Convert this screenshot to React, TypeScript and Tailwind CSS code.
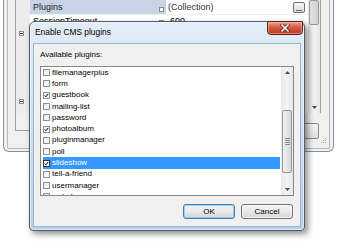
import React from "react";

type Item = { label: string; checked: boolean; selected?: boolean };

const items: Item[] = [
  { label: "filemanagerplus", checked: false },
  { label: "form", checked: false },
  { label: "guestbook", checked: true },
  { label: "mailing-list", checked: false },
  { label: "password", checked: false },
  { label: "photoalbum", checked: true },
  { label: "pluginmanager", checked: false },
  { label: "poll", checked: false },
  { label: "slideshow", checked: true, selected: true },
  { label: "tell-a-friend", checked: false },
  { label: "usermanager", checked: false },
  { label: "webshop", checked: false },
];

function Check() {
  return (
    <svg width="7" height="7" viewBox="0 0 7 7" className="block">
      <path d="M1.1 3.5 L2.7 5.3 L5.9 1.3" fill="none" stroke="#000" strokeWidth="1.4" />
    </svg>
  );
}

function Collapse() {
  return (
    <div className="w-[5px] h-[5px] border border-[#8c8c8c] bg-white flex items-center justify-center">
      <div className="w-[3px] h-[1px] bg-[#333]" />
    </div>
  );
}

function UpArrow() {
  return (
    <svg width="5" height="3" viewBox="0 0 5 3" className="block">
      <path d="M0 3 L2.5 0 L5 3 Z" fill="#4a4a4a" />
    </svg>
  );
}

function DownArrow() {
  return (
    <svg width="5" height="3" viewBox="0 0 5 3" className="block">
      <path d="M0 0 L5 0 L2.5 3 Z" fill="#4a4a4a" />
    </svg>
  );
}

export default function App() {
  return (
    <div className="relative w-[337px] h-[246px] overflow-hidden bg-white font-['Liberation_Sans',Arial,sans-serif] text-black">
      {/* background window */}
      <div className="ml-[3px] w-[331px] h-[152px] border-x border-b border-[#8d9094] rounded-b-[6px] bg-[#eef1f5] px-[3px] pb-[2px] flex">
        <div className="flex-1 border-x border-b border-[#b4b8bd] rounded-b-[2px] bg-[#f0f0f0] flex flex-col">
          {/* top row: property grid */}
          <div className="h-[113px] flex">
            <div className="w-[7px]" />
            <div className="w-[306px] border-x border-[#a0a0a0] flex">
              {/* gutter */}
              <div className="w-[14px] bg-[#ececec] flex flex-col items-start pl-[3px]">
                <div className="mt-[31px]"><Collapse /></div>
                <div className="mt-[63px]"><Collapse /></div>
              </div>
              {/* content */}
              <div className="w-[278px] bg-white flex flex-col text-[9px] leading-none">
                <div className="h-[14px] flex">
                  <div className="w-[136px] bg-[#c8d3e6] flex items-center pl-[3px] pr-[1px] justify-between">
                    <span className="text-[#1a1a2e]">Plugins</span>
                    <div className="w-[5px] h-[5px] border border-[#8a8a8a] bg-white mt-[5px] mr-[1px]" />
                  </div>
                  <div className="flex-1 flex items-center justify-between pl-[2px] pr-[3px]">
                    <span className="text-[#333]">(Collection)</span>
                    <div className="w-[12px] h-[11px] border border-[#707070] rounded-[2px] bg-gradient-to-b from-[#f7f7f7] to-[#dcdcdc] flex items-end justify-center pb-[1px]">
                      <span className="text-[7px] leading-[5px] font-bold">...</span>
                    </div>
                  </div>
                </div>
                <div className="h-[14px] flex border-t border-[#f0f0f0]">
                  <div className="w-[136px] pl-[3px] pt-[2px] flex justify-between pr-[1px]">
                    <span>SessionTimeout</span>
                    <div className="w-[5px] h-[5px] border border-[#8a8a8a] bg-white mt-[3px] mr-[1px]" />
                  </div>
                  <div className="flex-1 pl-[4px] pt-[2px]">600</div>
                </div>
                <div className="flex-1 bg-white" />
              </div>
              {/* scrollbar */}
              <div className="w-[12px] bg-gradient-to-r from-[#e6e6e6] via-[#f4f4f4] to-[#e6e6e6] flex flex-col">
                <div className="h-[25px] mx-[1px] border border-[#9a9a9a] rounded-[2px] bg-gradient-to-r from-[#e2e2e2] to-[#cfcfcf]" />
                <div className="flex-1" />
                <div className="h-[12px] flex items-center justify-center">
                  <DownArrow />
                </div>
              </div>
            </div>
          </div>
          {/* bottom row */}
          <div className="flex-1 flex">
            <div className="w-[7px]" />
            <div className="w-[180px] h-[18px] border-l border-b border-[#a0a0a0]" />
            <div className="w-[108px]" />
            <div className="w-[16px] h-[16px] mt-[10px] border border-[#8a8a8a] rounded-[2px] bg-gradient-to-b from-[#f4f4f4] to-[#dedede]" />
            <div className="flex-1 flex items-end justify-center pb-[4px]">
              <svg width="6" height="6" viewBox="0 0 6 6" className="block">
                <rect x="4" y="0" width="1" height="1" fill="#aaa" />
                <rect x="2" y="2" width="1" height="1" fill="#aaa" />
                <rect x="4" y="2" width="1" height="1" fill="#aaa" />
                <rect x="0" y="4" width="1" height="1" fill="#aaa" />
                <rect x="2" y="4" width="1" height="1" fill="#aaa" />
                <rect x="4" y="4" width="1" height="1" fill="#aaa" />
              </svg>
            </div>
          </div>
        </div>
      </div>

      {/* dialog */}
      <div className="absolute left-[29px] top-[21px] w-[276px] h-[210px] rounded-t-[6px] rounded-b-[4px] border border-[#4f5d6e] bg-gradient-to-b from-[#e3edf8] via-[#cbdcef] to-[#b9cfe9] shadow-[inset_0_0_0_1px_rgba(255,255,255,0.55),3px_3px_6px_rgba(0,0,0,0.45)] flex flex-col px-[3px] pb-[3px]">
        <div className="h-[21px] flex items-center pl-[2px]">
          <span className="text-[8.4px] leading-none text-black">Enable CMS plugins</span>
        </div>
        <div className="absolute left-[237px] top-[-1px] w-[36px] h-[14px] rounded-b-[4px] border border-[#5b2118] bg-gradient-to-b from-[#e9a091] via-[#d05540] to-[#bb3b25] shadow-[inset_0_0_0_1px_rgba(255,200,190,0.5)] flex items-center justify-center">
          <svg width="10" height="8" viewBox="0 0 10 8" className="block">
            <path d="M2 1 L8 7 M8 1 L2 7" stroke="#5a1e14" strokeWidth="3" strokeLinecap="square" />
            <path d="M2 1 L8 7 M8 1 L2 7" stroke="#ffffff" strokeWidth="1.6" strokeLinecap="square" />
          </svg>
        </div>
        {/* client area */}
        <div className="flex-1 border border-[#9fb6d1] bg-[#f0f0f0] flex flex-col pl-[6px] pr-[6px]">
          <div className="h-[22px] flex items-center text-[8px] leading-none">Available plugins:</div>
          {/* listbox */}
          <div className="h-[130px] border border-[#828790] bg-white flex">
            <div className="flex-1 pl-[2px] pr-[1px] overflow-hidden flex flex-col">
              {items.map((it) => (
                <div
                  key={it.label}
                  className={
                    "h-[11.3px] shrink-0 flex items-center gap-[2px] " +
                    (it.selected ? "bg-[#3399ff] text-white" : "text-black")
                  }
                >
                  <div
                    className={
                      "w-[7px] h-[7px] border flex items-center justify-center shrink-0 " +
                      (it.selected ? "border-[#333] bg-white" : "border-[#8e8f8f] bg-gradient-to-br from-[#e9e9e9] to-white")
                    }
                  >
                    {it.checked ? <Check /> : null}
                  </div>
                  <span className="text-[8px] leading-none">{it.label}</span>
                </div>
              ))}
            </div>
            {/* scrollbar */}
            <div className="w-[12px] bg-gradient-to-r from-[#e8e8e8] via-[#f3f3f3] to-[#e8e8e8] flex flex-col">
              <div className="h-[11px] flex items-center justify-center">
                <UpArrow />
              </div>
              <div className="h-[32px]" />
              <div className="h-[63px] mx-[1px] border border-[#979797] rounded-[2px] bg-gradient-to-r from-[#f2f2f2] to-[#d6d6d6] flex flex-col items-center justify-center gap-[1px]">
                <div className="w-[5px] h-[1px] bg-[#8a8a8a]" />
                <div className="w-[5px] h-[1px] bg-[#8a8a8a]" />
                <div className="w-[5px] h-[1px] bg-[#8a8a8a]" />
                <div className="w-[5px] h-[1px] bg-[#8a8a8a]" />
              </div>
              <div className="flex-1" />
              <div className="h-[11px] flex items-center justify-center">
                <DownArrow />
              </div>
            </div>
          </div>
          {/* buttons */}
          <div className="mt-[8px] flex justify-end gap-[6px] pr-[1px]">
            <div className="w-[52px] h-[15px] rounded-[3px] border border-[#3c7fb1] bg-gradient-to-b from-[#f2f2f2] via-[#e9e9e9] to-[#d4d4d4] shadow-[inset_0_0_0_1px_rgba(140,200,240,0.8)] flex items-center justify-center text-[8px] leading-none">
              OK
            </div>
            <div className="w-[52px] h-[15px] rounded-[3px] border border-[#707070] bg-gradient-to-b from-[#f2f2f2] via-[#e9e9e9] to-[#d4d4d4] shadow-[inset_0_0_0_1px_rgba(255,255,255,0.7)] flex items-center justify-center text-[8px] leading-none">
              Cancel
            </div>
          </div>
        </div>
      </div>
    </div>
  );
}
